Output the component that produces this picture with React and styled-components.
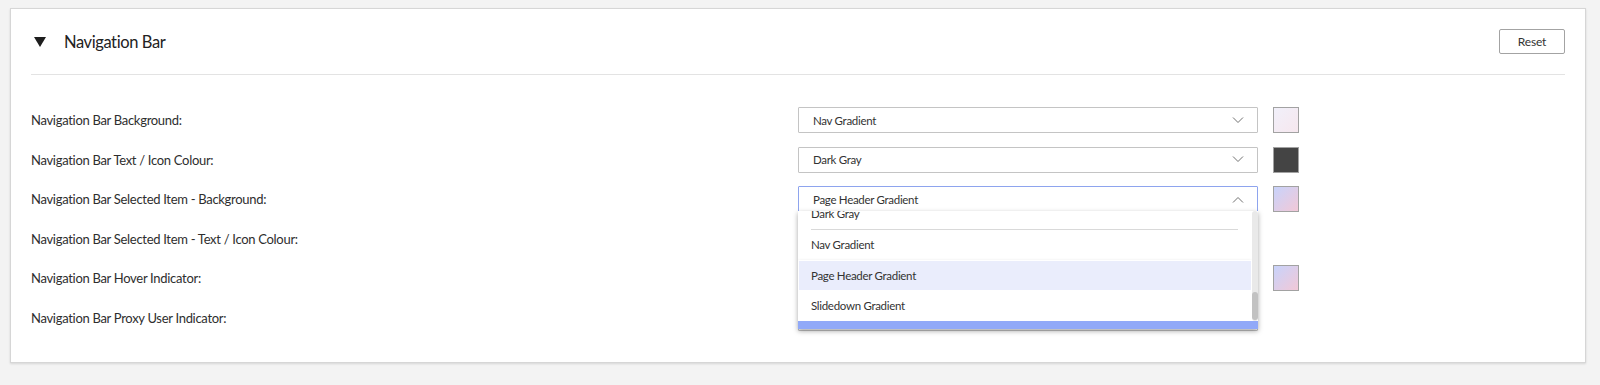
import React, { useLayoutEffect, useRef } from 'react';
import styled, { createGlobalStyle } from 'styled-components';

const GlobalStyle = createGlobalStyle`
  body {
    margin: 0;
    background: #f3f3f3;
    font-family: Lato, "Liberation Sans", sans-serif;
    color: #333;
  }
`;

const Page = styled.div`
  padding: 8px 14px 21px 10px;
`;

const Card = styled.section`
  background: #fff;
  border: 1px solid #d6d6d6;
  box-shadow: 0 1px 2px rgba(0, 0, 0, 0.12);
  padding: 0 20px 31px;
`;

const Header = styled.div`
  display: flex;
  align-items: center;
  padding: 20px 0 20px;
  border-bottom: 1px solid #e3e3e3;
`;

const Caret = styled.svg`
  width: 12px;
  height: 10px;
  margin-left: 3px;
  flex: none;
`;

const Title = styled.h2`
  margin: 0 0 0 18px;
  font-size: 16.5px;
  letter-spacing: -0.4px;
  font-weight: 400;
  color: #222;
  flex: 1;
`;

const ResetButton = styled.button`
  width: 66px;
  height: 25px;
  background: #fff;
  border: 1px solid #a3a3a3;
  border-radius: 2px;
  font-family: inherit;
  font-size: 12px;
  letter-spacing: -0.2px;
  color: #333;
  padding: 0;
`;

const Body = styled.div`
  display: flex;
  flex-direction: column;
  gap: 13.5px;
  padding-top: 32px;
`;

const Row = styled.div`
  display: flex;
  align-items: center;
  height: 26px;
`;

const Label = styled.div`
  flex: 0 0 50%;
  font-size: 13px;
  letter-spacing: -0.3px;
  color: #2e2e2e;
`;

const SelectWrap = styled.div`
  position: relative;
  flex: 0 0 30%;
  height: 26px;
  z-index: ${(p) => (p.$open ? 2 : 0)};
`;

const SelectBox = styled.div`
  box-sizing: border-box;
  height: 26px;
  display: flex;
  align-items: center;
  justify-content: space-between;
  padding: 0 13px 0 14px;
  border: 1px solid ${(p) => (p.$open ? '#8ea4ee' : '#c4c4c4')};
  border-radius: 1px;
  background: #fff;
  font-size: 11.5px;
  letter-spacing: -0.3px;
  color: #333;
`;

const Chevron = styled.svg`
  width: 12px;
  height: 7px;
  flex: none;
`;

const Swatch = styled.div`
  box-sizing: border-box;
  width: 26px;
  height: 26px;
  margin-left: 15px;
  border: 1px solid #a2a2a2;
  background: ${(p) => p.$fill};
`;

const Menu = styled.div`
  position: absolute;
  top: calc(100% - 1px);
  left: 0;
  right: 0;
  background: #fff;
  box-shadow: 0 2px 5px rgba(0, 0, 0, 0.35);
`;

const MenuBody = styled.div`
  display: flex;
  height: 110px;
`;

const MenuList = styled.div`
  flex: 1;
  overflow: hidden;
`;

const ScrollTrack = styled.div`
  width: 6px;
  display: flex;
  flex-direction: column;
  justify-content: flex-end;
  background: #e9e9e9;
  border-radius: 3px;
`;

const ScrollThumb = styled.div`
  height: 28px;
  margin-bottom: 1px;
  background: #c2c2c2;
  border-radius: 3px;
`;

const Option = styled.div`
  height: 30.5px;
  display: flex;
  align-items: center;
  padding: 0 13px;
  font-size: 11.5px;
  letter-spacing: -0.3px;
  color: #333;
  background: ${(p) => (p.$active ? '#eaedfc' : '#fff')};
  box-shadow: ${(p) =>
    p.$active ? 'inset 0 0 0 1px #fff, 0 1px 3px rgba(0, 0, 0, 0.16)' : 'none'};
`;

const Divider = styled.div`
  height: 1px;
  margin: 0 14px 0 13px;
  background: #d9d9d9;
`;

const MenuFooter = styled.div`
  height: 8px;
  background: #91a9f8;
`;

const NAV_GRADIENT = 'linear-gradient(135deg, #f1f0fa 0%, #f6e7ee 100%)';
const HEADER_GRADIENT = 'linear-gradient(135deg, #c8d3fb 0%, #f2c8d7 100%)';

const rows = [
  { label: 'Navigation Bar Background:', value: 'Nav Gradient', swatch: NAV_GRADIENT },
  { label: 'Navigation Bar Text / Icon Colour:', value: 'Dark Gray', swatch: '#444444' },
  { label: 'Navigation Bar Selected Item - Background:', value: 'Page Header Gradient', swatch: HEADER_GRADIENT, open: true },
  { label: 'Navigation Bar Selected Item - Text / Icon Colour:', value: 'Dark Gray' },
  { label: 'Navigation Bar Hover Indicator:', value: 'Page Header Gradient', swatch: HEADER_GRADIENT },
  { label: 'Navigation Bar Proxy User Indicator:', value: 'Orange' },
];

const solidColours = [
  'Black', 'White', 'Blue', 'Light Blue', 'Green', 'Red',
  'Orange', 'Purple', 'Light Gray', 'Gray', 'Dark Gray',
];
const gradients = ['Nav Gradient', 'Page Header Gradient', 'Slidedown Gradient'];

const ChevronIcon = ({ up }) => (
  <Chevron viewBox="0 0 12 7">
    <polyline
      points={up ? '1,6.5 6,1.5 11,6.5' : '1,0.5 6,5.5 11,0.5'}
      fill="none"
      stroke="#707070"
      strokeWidth="1"
    />
  </Chevron>
);

// list is scrolled to its end, so the last options show
const Dropdown = ({ value }) => {
  const listRef = useRef(null);

  useLayoutEffect(() => {
    listRef.current.scrollTop = listRef.current.scrollHeight;
  }, []);

  return (
    <Menu>
      <MenuBody>
        <MenuList ref={listRef}>
          {solidColours.map((c) => (
            <Option key={c} $active={c === value}>{c}</Option>
          ))}
          <Divider />
          {gradients.map((g) => (
            <Option key={g} $active={g === value}>{g}</Option>
          ))}
        </MenuList>
        <ScrollTrack>
          <ScrollThumb />
        </ScrollTrack>
      </MenuBody>
      <MenuFooter />
    </Menu>
  );
};

const App = () => (
  <>
    <GlobalStyle />
    <Page>
      <Card>
        <Header>
          <Caret viewBox="0 0 12 10">
            <polygon points="0,0 12,0 6,10" fill="#1e1e1e" />
          </Caret>
          <Title>Navigation Bar</Title>
          <ResetButton>Reset</ResetButton>
        </Header>
        <Body>
          {rows.map((row) => (
            <Row key={row.label}>
              <Label>{row.label}</Label>
              <SelectWrap $open={row.open}>
                <SelectBox $open={row.open}>
                  <span>{row.value}</span>
                  <ChevronIcon up={row.open} />
                </SelectBox>
                {row.open && <Dropdown value={row.value} />}
              </SelectWrap>
              {row.swatch && <Swatch $fill={row.swatch} />}
            </Row>
          ))}
        </Body>
      </Card>
    </Page>
  </>
);

export default App;
